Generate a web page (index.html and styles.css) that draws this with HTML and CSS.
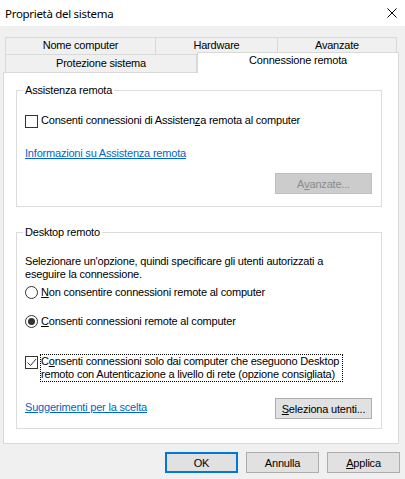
FILE: index.html
```html
<!DOCTYPE html>
<html lang="it">
<head>
<meta charset="utf-8">
<title>Proprietà del sistema</title>
<link rel="stylesheet" href="styles.css">
</head>
<body>
<div class="titlebar">
  <span class="title">Proprietà del sistema</span>
  <svg class="close" width="10" height="10" viewBox="0 0 10 10"><path d="M0.5 0.5L9.5 9.5M9.5 0.5L0.5 9.5" stroke="#000" stroke-width="1" fill="none"/></svg>
</div>
<div class="main">
  <div class="tabs">
    <div class="tabrow row1">
      <div class="tab t-nome">Nome computer</div>
      <div class="tab t-hw">Hardware</div>
      <div class="tab t-av">Avanzate</div>
    </div>
    <div class="tabrow row2">
      <div class="tab t-prot">Protezione sistema</div>
      <div class="tab sel">Connessione remota</div>
    </div>
  </div>
  <div class="panel">
    <fieldset class="group g1">
      <legend>Assistenza remota</legend>
      <div class="opt">
        <span class="box"></span>
        <span class="lbl">Consenti connessioni di Assisten<u>z</u>a remota al computer</span>
      </div>
      <a class="link l1" href="#">Informazioni su Assistenza remota</a>
      <div class="btnrow">
        <span class="btn wide disabled">A<u>v</u>anzate...</span>
      </div>
    </fieldset>
    <fieldset class="group g2">
      <legend>Desktop remoto</legend>
      <p class="desc">Selezionare un'opzione, quindi specificare gli utenti autorizzati a<br>eseguire la connessione.</p>
      <div class="opt r1">
        <span class="radio"></span>
        <span class="lbl"><u>N</u>on consentire connessioni remote al computer</span>
      </div>
      <div class="opt r2">
        <span class="radio on"></span>
        <span class="lbl"><u>C</u>onsenti connessioni remote al computer</span>
      </div>
      <div class="opt c2">
        <span class="box checked"><svg width="11" height="11" viewBox="0 0 11 11"><path d="M1.5 5.5L4.5 8.5L10 2" stroke="#333" stroke-width="1" fill="none"/></svg></span>
        <span class="lbl focus">C<u>o</u>nsenti connessioni solo dai computer che eseguono Desktop<br>remoto con Autenticazione a livello di rete (opzione consigliata)</span>
      </div>
      <div class="btnrow split">
        <a class="link l2" href="#">Suggerimenti per la scelta</a>
        <span class="btn wide"><u>S</u>eleziona utenti...</span>
      </div>
    </fieldset>
  </div>
  <div class="footer">
    <span class="btn default">OK</span>
    <span class="btn">Annulla</span>
    <span class="btn"><u>A</u>pplica</span>
  </div>
</div>
</body>
</html>
```
FILE: styles.css
```css
* { box-sizing: border-box; }
html, body { margin: 0; padding: 0; }
body {
  width: 405px;
  height: 479px;
  overflow: hidden;
  background: #f0f0f0;
  color: #000;
  font-family: "Liberation Sans", Arial, sans-serif;
  font-size: 11px;
  letter-spacing: -0.2px;
}
u { text-decoration: underline; text-underline-offset: 1px; }

.titlebar {
  height: 26px;
  background: #fff;
  display: flex;
  align-items: center;
  justify-content: space-between;
  padding: 0 8px 0 5px;
}
.title {
  font-family: "Noto Sans", "Segoe UI", sans-serif;
  font-size: 11.5px;
  letter-spacing: -0.3px;
}
.close { display: block; }

.main {
  height: 453px;
  display: flex;
  flex-direction: column;
}

.tabs { margin-top: 11px; }
.tabrow { display: flex; margin-left: 5px; align-items: flex-start; }
.row1 { height: 17px; }
.row2 { height: 18px; }
.tab {
  border: 1px solid #d9d9d9;
  border-bottom: none;
  background: #f0f0f0;
  text-align: center;
  white-space: nowrap;
}
.row1 .tab { height: 17px; line-height: 15px; margin-right: -1px; }
.t-nome { width: 151px; }
.t-hw { width: 123px; }
.t-av { width: 120px; }
.row2 .tab { height: 18px; line-height: 17px; }
.t-prot { width: 192px; }
.row2 .tab.sel {
  width: 202px;
  height: 21px;
  margin-top: -2px;
  line-height: 15px;
  background: #fff;
  position: relative;
  z-index: 1;
}

.panel {
  margin-left: 3px;
  width: 396px;
  height: 372px;
  background: #fff;
  border: 1px solid #d9d9d9;
  padding: 0 15px 0 12px;
}

.group {
  width: 366px;
  min-width: 0;
  margin: 0;
  border: 1px solid #dcdcdc;
  display: flex;
  flex-direction: column;
  align-items: flex-start;
}
.group legend {
  padding: 0 2px;
  margin-left: -2px;
  line-height: 13px;
}
.g1 { margin-top: 11px; padding: 16px 9px 12px 8px; }
.g2 { margin-top: 19px; padding: 16px 9px 9px 8px; }

.opt { display: flex; align-items: flex-start; }
.lbl {
  margin-left: 2px;
  border: 1px dotted transparent;
  line-height: 13px;
  white-space: nowrap;
}
.lbl.focus { border-color: #000; padding-right: 3px; }
.box {
  width: 13px;
  height: 13px;
  margin-top: 2px;
  border: 1px solid #333;
  background: #fff;
  display: flex;
  align-items: center;
  justify-content: center;
  flex: none;
}
.box svg { display: block; }
.radio {
  width: 13px;
  height: 13px;
  margin-top: 1px;
  border: 1px solid #333;
  border-radius: 50%;
  background: #fff;
  display: flex;
  align-items: center;
  justify-content: center;
  flex: none;
}
.radio.on::after {
  content: "";
  width: 7px;
  height: 7px;
  border-radius: 50%;
  background: #333;
}

.link {
  color: #0066cc;
  text-decoration: underline;
  line-height: 13px;
}
.l1 { margin-top: 19px; }

.btnrow {
  align-self: stretch;
  display: flex;
  justify-content: flex-end;
  align-items: flex-start;
}
.g1 .btnrow { margin-top: 13px; }
.btnrow.split { justify-content: space-between; margin-top: 16px; }
.l2 { margin-top: 3px; }

.btn {
  display: flex;
  align-items: center;
  justify-content: center;
  height: 21px;
  width: 73px;
  background: #e1e1e1;
  border: 1px solid #adadad;
  white-space: nowrap;
}
.btn.wide { width: 97px; }
.btn.disabled {
  background: #cccccc;
  border-color: #bfbfbf;
  color: #8b8b8b;
}
.btn.default { border: 2px solid #0078d7; }

.desc { margin: 0; line-height: 13px; }
.r1 { margin-top: 4px; }
.r2 { margin-top: 14px; }
.c2 { margin-top: 25px; }

.footer {
  display: flex;
  justify-content: flex-end;
  gap: 8px;
  margin-top: 8px;
  padding-right: 5px;
}
```
